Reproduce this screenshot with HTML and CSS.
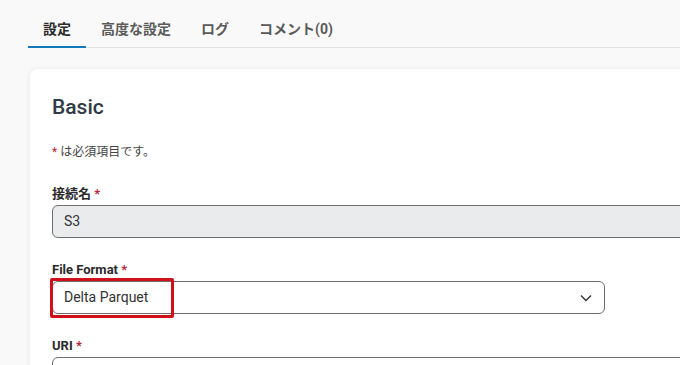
FILE: index.html
```html
<!DOCTYPE html>
<html lang="ja">
<head>
    <meta charset="UTF-8">
    <meta name="viewport" content="width=device-width, initial-scale=1.0">
    <title>接続設定</title>
    <link rel="stylesheet" href="styles.css">
</head>
<body>
    <div class="tabs">
        <div class="tab active">設定</div>
        <div class="tab">高度な設定</div>
        <div class="tab">ログ</div>
        <div class="tab">コメント(0)</div>
    </div>

    <div class="card">
        <h2 class="card-title">Basic</h2>
        <p class="note"><span class="req">*</span> は必須項目です。</p>

        <div class="field">
            <label class="label">接続名 <span class="req">*</span></label>
            <div class="input readonly">S3</div>
        </div>

        <div class="field">
            <label class="label">File Format <span class="req">*</span></label>
            <div class="select">
                <span>Delta Parquet</span>
                <svg class="chevron" width="12" height="8" viewBox="0 0 12 8">
                    <path d="M1 1.5 L6 6.5 L11 1.5" fill="none" stroke="#333" stroke-width="1.4"/>
                </svg>
                <div class="highlight"></div>
            </div>
        </div>

        <div class="field">
            <label class="label">URI <span class="req">*</span></label>
            <div class="input"></div>
        </div>
    </div>
</body>
</html>
```

FILE: styles.css
```css
* {
    margin: 0;
    padding: 0;
    box-sizing: border-box;
}

html,
body {
    overflow: hidden;
}

body {
    background-color: #f9f9f9;
    font-family: Roboto, "Noto Sans CJK JP", sans-serif;
    color: #333;
    height: 365px;
}

.tabs {
    display: flex;
    margin-left: 28px;
    border-bottom: 1px solid #e2e2e2;
}

.tab {
    height: 48px;
    padding: 12px 15px 0;
    line-height: 34px;
    font-size: 14px;
    font-weight: 700;
    color: #5a5a5a;
    border-bottom: 2px solid transparent;
    margin-bottom: -1px;
}

.tab.active {
    color: #2b2b2b;
    border-bottom-color: #1479b8;
}

.card {
    width: 720px;
    margin: 21px 0 0 30px;
    padding: 24px 22px;
    background-color: #fff;
    border-radius: 8px;
    box-shadow: 0 0 6px rgba(0, 0, 0, 0.07);
}

.card-title {
    font-size: 21px;
    line-height: 28px;
    font-weight: 500;
    color: #2f3a44;
}

.note {
    margin-top: 23px;
    font-size: 12px;
    line-height: 16px;
    color: #444;
}

.req {
    color: #b3263a;
}

.field {
    margin-top: 24px;
}

.field:first-of-type {
    margin-top: 26px;
}

.label {
    display: block;
    font-size: 13px;
    line-height: 16px;
    font-weight: 700;
    color: #2b2b2b;
    margin-bottom: 3px;
}

.input,
.select {
    height: 33px;
    border: 1px solid #6e6e6e;
    border-radius: 6px;
    padding: 0 11px;
    font-size: 14px;
    line-height: 31px;
    color: #333;
}

.input.readonly {
    background-color: #e9ebed;
}

.select {
    position: relative;
    width: 553px;
    display: flex;
    align-items: center;
    justify-content: space-between;
    padding-right: 12px;
}

.chevron {
    display: block;
}

.highlight {
    position: absolute;
    left: -3px;
    top: -4px;
    width: 124px;
    height: 40px;
    border: 3px solid #d0101a;
    border-radius: 2px;
}
```
